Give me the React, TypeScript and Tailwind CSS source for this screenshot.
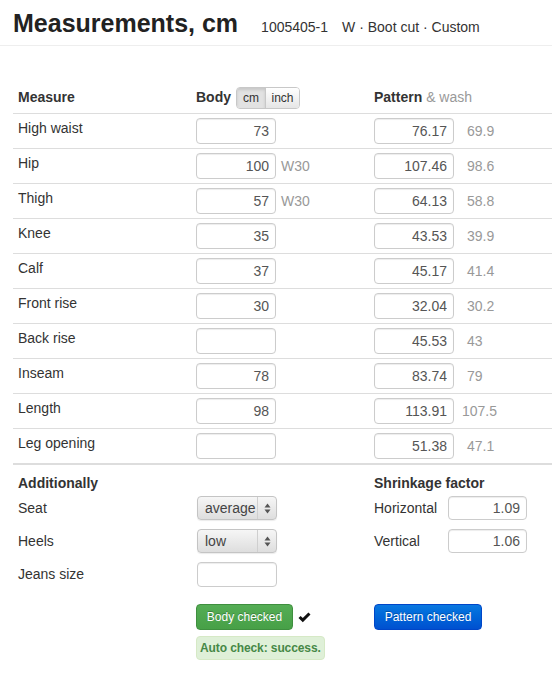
import { useState } from "react";

type Row = {
  name: string;
  body: string;
  size?: string;
  pattern: string;
  wash: string;
};

const rows: Row[] = [
  { name: "High waist", body: "73", pattern: "76.17", wash: "69.9" },
  { name: "Hip", body: "100", size: "W30", pattern: "107.46", wash: "98.6" },
  { name: "Thigh", body: "57", size: "W30", pattern: "64.13", wash: "58.8" },
  { name: "Knee", body: "35", pattern: "43.53", wash: "39.9" },
  { name: "Calf", body: "37", pattern: "45.17", wash: "41.4" },
  { name: "Front rise", body: "30", pattern: "32.04", wash: "30.2" },
  { name: "Back rise", body: "", pattern: "45.53", wash: "43" },
  { name: "Inseam", body: "78", pattern: "83.74", wash: "79" },
  { name: "Length", body: "98", pattern: "113.91", wash: "107.5" },
  { name: "Leg opening", body: "", pattern: "51.38", wash: "47.1" },
];

// поле ввода как в bootstrap 2
const Field = ({ value, w = "w-[80px]", h = "h-[26px]" }: { value: string; w?: string; h?: string }) => (
  <input
    readOnly
    value={value}
    className={`${w} ${h} rounded-[4px] border border-[#ccc] bg-white pr-[6px] text-right text-[14px] text-[#555] shadow-[inset_0_1px_1px_rgba(0,0,0,0.075)] outline-none`}
  />
);

// маковский select
const FakeSelect = ({ value }: { value: string }) => (
  <div className="flex h-[24px] w-[80px] overflow-hidden rounded-[4px] border border-[#c4c4c4] bg-gradient-to-b from-[#f6f6f6] to-[#dedede] shadow-[0_1px_1px_rgba(0,0,0,0.08)]">
    <div className="flex-1 whitespace-nowrap pl-[7px] text-[14px] leading-[22px] text-[#444]">{value}</div>
    <div className="flex w-[19px] items-center justify-center border-l border-[#cfcfcf]">
      <svg width="7" height="11" viewBox="0 0 7 11">
        <path d="M3.5 0.5 L6.5 4.5 L0.5 4.5 Z" fill="#555" />
        <path d="M3.5 10.5 L6.5 6.5 L0.5 6.5 Z" fill="#555" />
      </svg>
    </div>
  </div>
);

export default function App() {
  const [unit, setUnit] = useState("cm");

  return (
    <div className="min-h-[673px] w-[552px] overflow-hidden bg-white font-['Liberation_Sans',Arial,sans-serif] text-[14px] text-[#333]">
      {/* заголовок */}
      <div className="flex h-[46px] items-baseline border-b border-[#eee] pl-[13px] pt-[8px]">
        <h1 className="text-[25px] font-bold leading-[30px] text-[#222]">Measurements, cm</h1>
        <span className="ml-[23px] text-[14px] text-[#333]">1005405-1</span>
        <span className="ml-[14px] text-[14px] text-[#333]">W · Boot cut · Custom</span>
      </div>

      {/* таблица мерок */}
      <div className="ml-[13px] mt-[34px] border-b-2 border-[#ddd]">
        <div className="grid h-[33px] grid-cols-[183px_178px_1fr] items-center">
          <div className="pl-[5px] font-bold leading-5">Measure</div>
          <div className="flex items-center">
            <span className="font-bold leading-5">Body</span>
            <div className="ml-[5px] mt-[3px] flex h-[22px] overflow-hidden rounded-[4px] border border-[#c8c8c8] text-[12px]">
              <button
                onClick={() => setUnit("cm")}
                className={`w-[29px] border-r border-[#c8c8c8] ${unit === "cm" ? "bg-[#e2e2e2] shadow-[inset_0_2px_3px_rgba(0,0,0,0.12)]" : "bg-gradient-to-b from-white to-[#e6e6e6]"}`}
              >
                cm
              </button>
              <button
                onClick={() => setUnit("inch")}
                className={`w-[33px] ${unit === "inch" ? "bg-[#e2e2e2] shadow-[inset_0_2px_3px_rgba(0,0,0,0.12)]" : "bg-gradient-to-b from-white to-[#e6e6e6]"}`}
              >
                inch
              </button>
            </div>
          </div>
          <div className="leading-5">
            <span className="font-bold">Pattern</span> <span className="text-[#999]">&amp; wash</span>
          </div>
        </div>

        {rows.map((r) => (
          <div key={r.name} className="grid h-[35px] grid-cols-[183px_178px_1fr] border-t border-[#ddd] pt-[4px]">
            <div className="pl-[5px] leading-5">{r.name}</div>
            <div className="flex items-center self-start">
              <Field value={r.body} />
              {r.size && <span className="ml-[5px] text-[#999]">{r.size}</span>}
            </div>
            <div className="flex items-center self-start">
              <Field value={r.pattern} />
              <span className={`text-[#999] ${r.wash.length > 4 ? "ml-[8px]" : "ml-[13px]"}`}>{r.wash}</span>
            </div>
          </div>
        ))}
      </div>

      {/* дополнительно */}
      <div className="ml-[13px] grid grid-cols-[361px_1fr] pt-[8px]">
        <div className="flex flex-col">
          <div className="mb-[3px] pl-[5px] font-bold leading-5">Additionally</div>
          <div className="flex flex-col gap-[9px]">
            <div className="grid grid-cols-[184px_1fr] items-center">
              <span className="pl-[5px]">Seat</span>
              <FakeSelect value="average" />
            </div>
            <div className="grid grid-cols-[184px_1fr] items-center">
              <span className="pl-[5px]">Heels</span>
              <FakeSelect value="low" />
            </div>
            <div className="grid grid-cols-[184px_1fr] items-center">
              <span className="pl-[5px]">Jeans size</span>
              <Field value="" h="h-[25px]" />
            </div>
          </div>
        </div>
        <div className="flex flex-col">
          <div className="mb-[3px] font-bold leading-5">Shrinkage factor</div>
          <div className="flex flex-col gap-[9px]">
            <div className="grid grid-cols-[74px_1fr] items-center">
              <span>Horizontal</span>
              <Field value="1.09" w="w-[79px]" h="h-[24px]" />
            </div>
            <div className="grid grid-cols-[74px_1fr] items-center">
              <span>Vertical</span>
              <Field value="1.06" w="w-[79px]" h="h-[24px]" />
            </div>
          </div>
        </div>
      </div>

      {/* кнопки */}
      <div className="ml-[196px] mt-[17px] flex items-start">
        <div className="flex w-[178px] flex-col">
          <div className="flex items-center">
            <button className="h-[26px] w-[97px] rounded-[4px] border border-[#3f8f3f] bg-gradient-to-b from-[#55ad55] to-[#47a047] text-[12px] text-white [text-shadow:0_-1px_0_rgba(0,0,0,0.25)]">
              Body checked
            </button>
            <svg className="ml-[5px]" width="13" height="11" viewBox="0 0 13 11">
              <path d="M0.5 6 L2.6 3.9 L4.8 6.1 L10.4 0.5 L12.5 2.6 L4.8 10.3 Z" fill="#111" />
            </svg>
          </div>
          <div className="mt-[6px] h-[24px] self-start whitespace-nowrap rounded-[4px] border border-[#d6e9c6] bg-[#dff0d8] px-[3px] text-[12px] font-bold leading-[22px] tracking-[-0.1px] text-[#468847]">
            Auto check: success.
          </div>
        </div>
        <button className="h-[26px] w-[108px] rounded-[4px] border border-[#0046c8] bg-gradient-to-b from-[#0a78e0] to-[#0050d0] text-[12px] text-white [text-shadow:0_-1px_0_rgba(0,0,0,0.25)]">
          Pattern checked
        </button>
      </div>
    </div>
  );
}
